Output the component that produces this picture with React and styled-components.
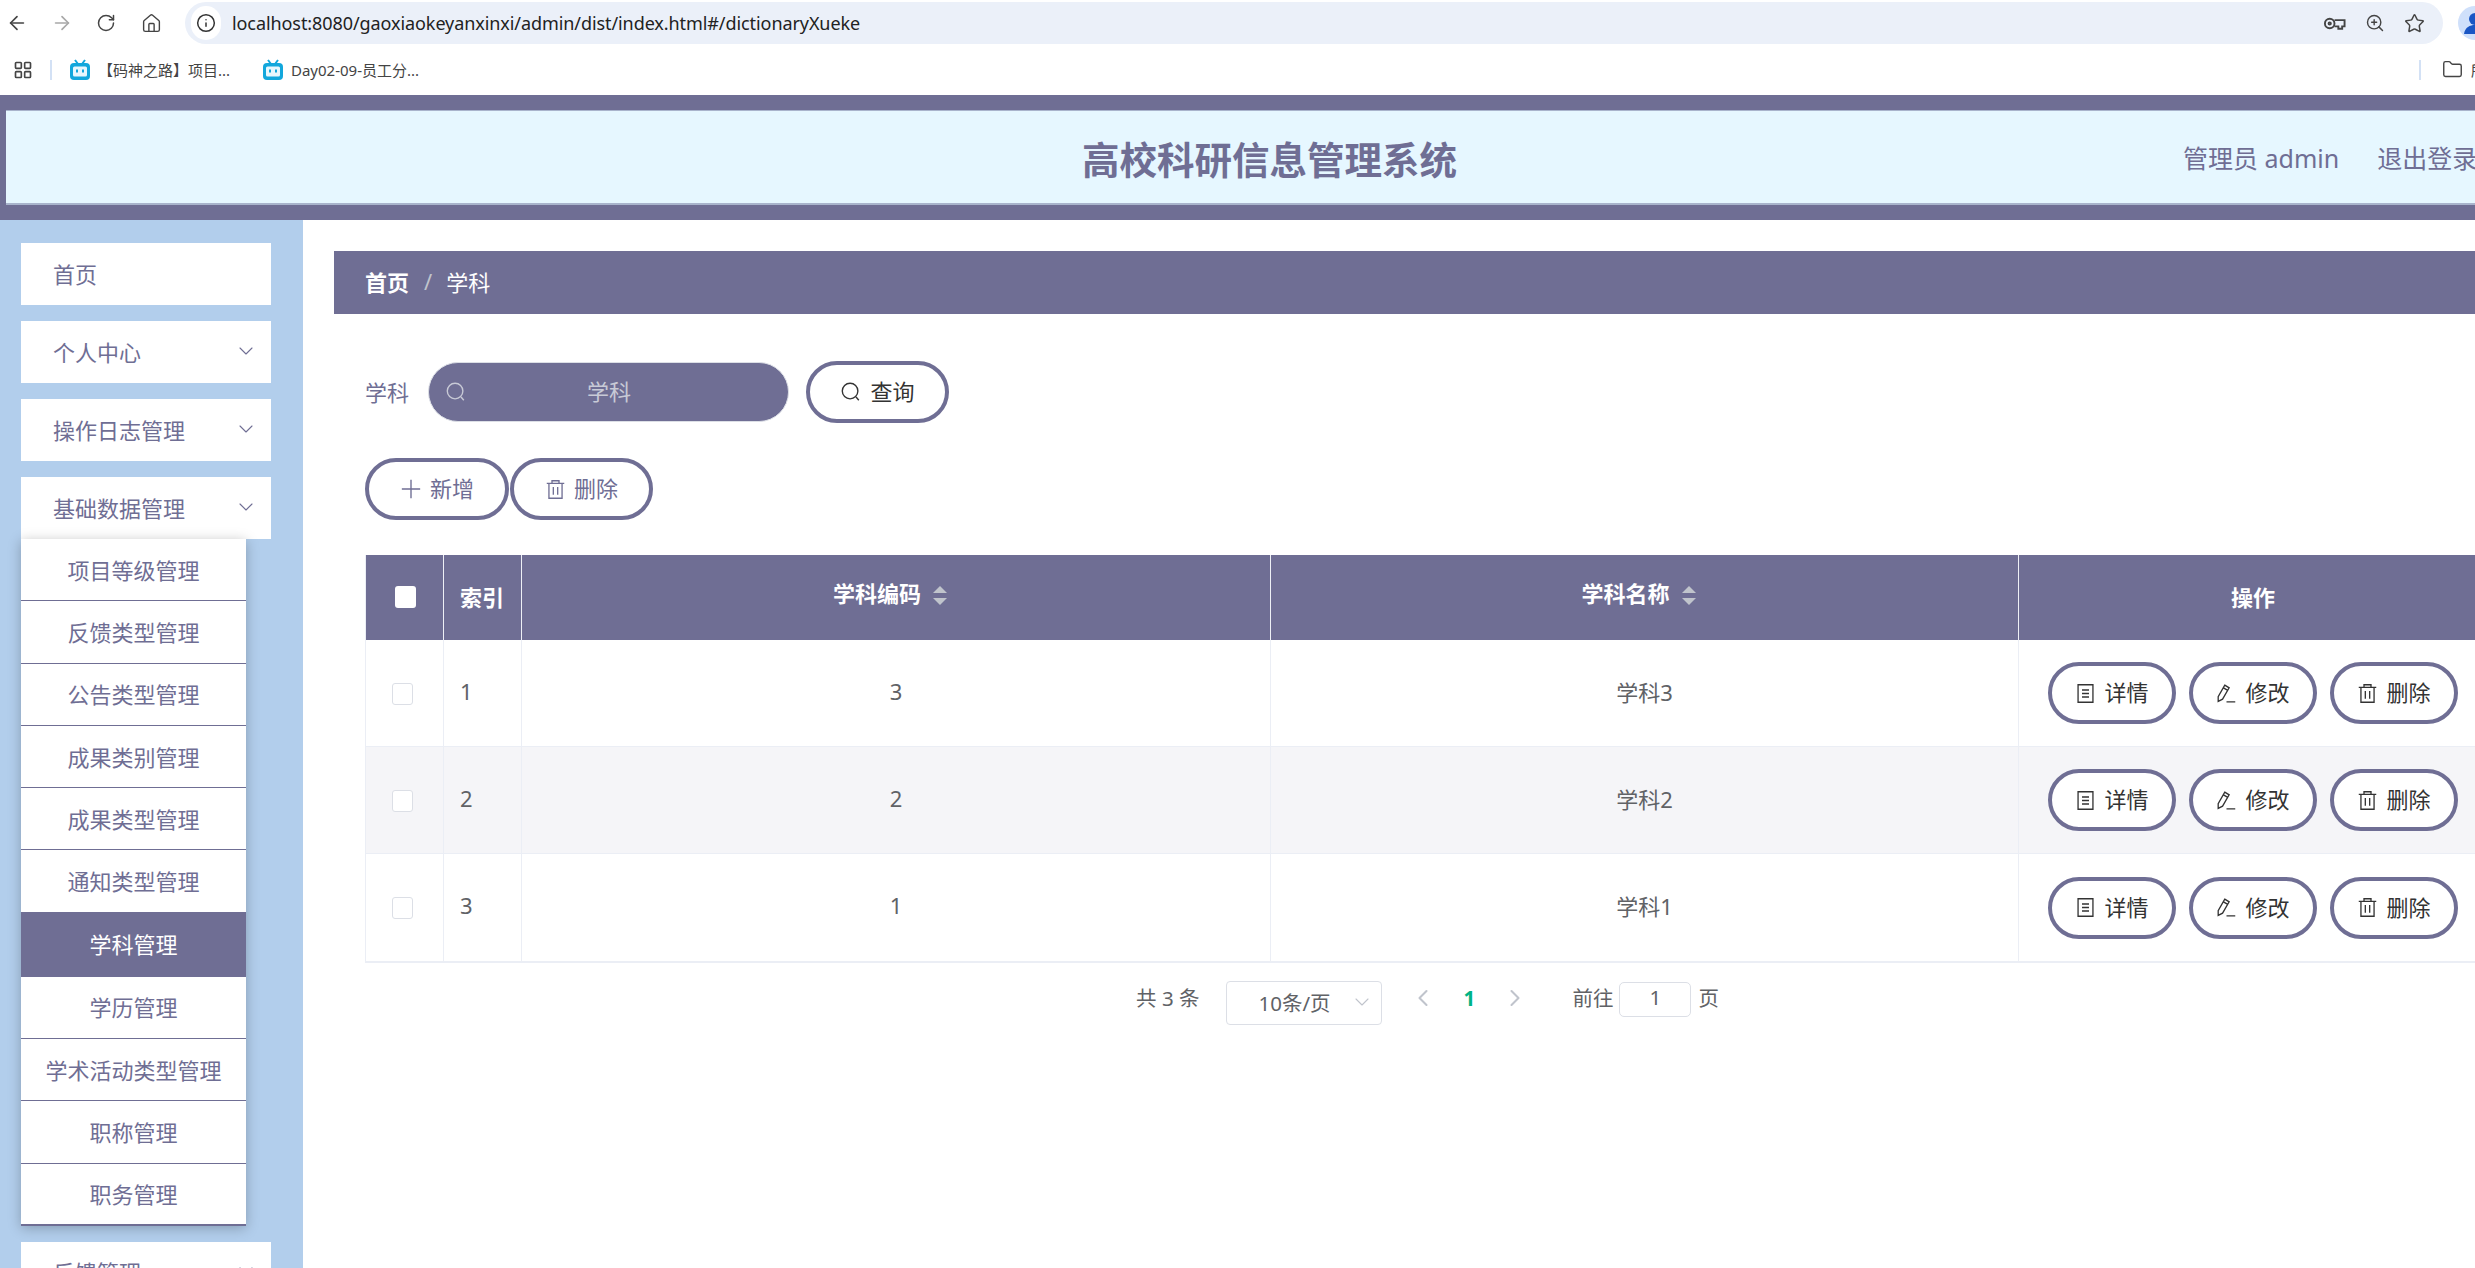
import styled, { createGlobalStyle } from 'styled-components';
import { ArrowLeft, ArrowRight, RotateCw, Home, Info, ZoomIn, Star, Folder, ChevronDown, ChevronLeft, ChevronRight, LayoutGrid } from 'lucide-react';

const purple = '#6f6e94';

const GlobalStyle = createGlobalStyle`
  html, body {
    margin: 0;
    padding: 0;
    width: 2475px;
    height: 1268px;
    overflow: hidden;
    background: #fff;
    font-family: "Noto Sans", "Noto Sans CJK SC", sans-serif;
  }
  * { box-sizing: border-box; }
  svg { flex-shrink: 0; }
`;

const Page = styled.div`
  width: 2475px;
  height: 1268px;
  display: flex;
  flex-direction: column;
  overflow: hidden;
`;

const Toolbar = styled.div`
  height: 46px;
  display: flex;
  align-items: center;
  padding: 2px 0;
  color: #444;
`;

const ToolIcon = styled.span`
  width: 45px;
  display: flex;
  padding-left: 6px;
  flex-shrink: 0;
  color: ${(p) => (p.$muted ? '#a8a8a8' : '#444')};
`;

const AddressBar = styled.div`
  width: 2258px;
  height: 42px;
  margin-left: 5px;
  flex-shrink: 0;
  border-radius: 21px;
  background: #ebf0f9;
  display: flex;
  align-items: center;
  padding: 0 18px 0 6px;
  font-size: 18px;
  letter-spacing: -0.08px;
  color: #222;
`;

const InfoBadge = styled.span`
  width: 30px;
  height: 34px;
  border-radius: 17px;
  background: #fff;
  display: flex;
  align-items: center;
  justify-content: center;
  margin-right: 11px;
  color: #333;
`;

const AddressRight = styled.div`
  margin-left: auto;
  display: flex;
  align-items: center;
  gap: 19px;
  color: #444;
`;

const Avatar = styled.span`
  margin-left: 15px;
  flex-shrink: 0;
  display: flex;
`;

const BookmarkBar = styled.div`
  height: 49px;
  display: flex;
  align-items: center;
  padding: 0 0 2px 13px;
  font-size: 15px;
  color: #444;
  white-space: nowrap;
`;

const Separator = styled.span`
  width: 2px;
  height: 20px;
  background: #d3e1f5;
  flex-shrink: 0;
  margin: ${(p) => p.$margin};
`;

const Bookmark = styled.span`
  display: flex;
  align-items: center;
  gap: 8px;
  width: ${(p) => p.$width}px;
  flex-shrink: 0;
`;

const BookmarkFolder = styled.span`
  margin-left: 21px;
  display: flex;
  align-items: center;
  gap: 8px;
  flex-shrink: 0;
`;

const Header = styled.header`
  height: 125px;
  background: ${purple};
  padding: 15px 0 15px 6px;
  flex-shrink: 0;
`;

const HeaderInner = styled.div`
  height: 95px;
  background: #e6f7ff;
  border-top: 1px solid #a9b4cc;
  border-bottom: 2px solid #a9b4cc;
  display: flex;
  align-items: center;
  overflow: hidden;
  color: ${purple};
  white-space: nowrap;
`;

const Title = styled.div`
  margin-left: 1076px;
  width: 375px;
  flex-shrink: 0;
  font-size: 37.5px;
  font-weight: 700;
`;

const HeaderLink = styled.span`
  margin-left: ${(p) => p.$left}px;
  flex-shrink: 0;
  font-size: 25px;
`;

const Main = styled.div`
  flex: 1;
  min-height: 0;
  display: flex;
`;

const Sidebar = styled.aside`
  width: 303px;
  flex-shrink: 0;
  background: #b2ceec;
  padding: 23px 0 0 21px;
  overflow: hidden;
`;

const MenuItem = styled.div`
  width: 250px;
  height: 62px;
  background: #fff;
  margin-bottom: ${(p) => (p.$open ? 0 : 16)}px;
  padding: 0 13px 3px 32px;
  display: flex;
  align-items: center;
  justify-content: space-between;
  font-size: 22px;
  color: ${purple};
`;

const SubMenu = styled.div`
  width: 225px;
  margin-bottom: 16px;
  background: #fff;
  box-shadow: 0 2px 12px rgba(0, 0, 0, 0.25);
  border-bottom: 2px solid ${purple};
  position: relative;
`;

const SubItem = styled.div`
  height: ${(p) => (p.$active ? 64 : 62.3)}px;
  padding-bottom: 2px;
  display: flex;
  align-items: center;
  justify-content: center;
  font-size: 22px;
  white-space: nowrap;
  color: ${(p) => (p.$active ? '#fff' : purple)};
  background: ${(p) => (p.$active ? purple : '#fff')};
  border-bottom: 1.5px solid ${purple};
  &:last-child {
    height: 60.3px;
    border-bottom: none;
  }
`;

const Content = styled.main`
  flex: 1;
  min-width: 0;
  padding: 31px 0 0 31px;
  overflow: hidden;
`;

const Breadcrumb = styled.div`
  height: 63px;
  background: ${purple};
  padding: 0 0 3px 31px;
  display: flex;
  align-items: center;
  font-size: 22px;
  color: #fff;
`;

const CrumbHome = styled.span`
  font-weight: 700;
`;

const CrumbSlash = styled.span`
  margin: 0 14px 0 15px;
  color: #c0c4cc;
`;

const Body = styled.div`
  padding-left: 31px;
`;

const SearchRow = styled.div`
  margin-top: 47px;
  height: 62px;
  display: flex;
  align-items: center;
`;

const SearchLabel = styled.label`
  width: 63px;
  padding-bottom: 3px;
  font-size: 22px;
  color: ${purple};
`;

const SearchBox = styled.div`
  width: 361px;
  height: 60px;
  border-radius: 30px;
  background: ${purple};
  border: 1px solid #dcdfe6;
  display: flex;
  align-items: center;
  padding-left: 16px;
  color: #c8cad6;
`;

const Placeholder = styled.span`
  flex: 1;
  text-align: center;
  font-size: 22px;
  padding: 0 37px 5px 0;
`;

const PillButton = styled.button`
  height: 62px;
  width: ${(p) => p.$width}px;
  flex-shrink: 0;
  padding: 0;
  border: 4px solid ${purple};
  border-radius: 31px;
  background: #fff;
  display: inline-flex;
  align-items: center;
  justify-content: center;
  gap: 8px;
  font-family: inherit;
  font-size: 22px;
  color: ${(p) => (p.$accent ? purple : '#333')};
`;

const PillLabel = styled.span`
  margin-bottom: 4px;
`;

const QueryWrap = styled.div`
  margin-left: 17px;
`;

const ActionRow = styled.div`
  margin-top: 35px;
  display: flex;
  gap: 1px;
`;

const TableClip = styled.div`
  margin-top: 35px;
  width: 2123px;
`;

const Table = styled.table`
  width: 2123px;
  table-layout: fixed;
  border-collapse: separate;
  border-spacing: 0;
  border-left: 1px solid #ebeef5;
  border-bottom: 2px solid #ebeef5;
`;

const HeadCell = styled.th`
  height: 85px;
  background: ${purple};
  color: #fff;
  font-size: 22px;
  font-weight: 700;
  text-align: ${(p) => p.$align || 'center'};
  padding: ${(p) => (p.$sort ? '0 12px 12px 0' : p.$align === 'left' ? '0 0 3px 16px' : '0 0 3px')};
  border-right: 1.5px solid #eef0f6;
  &:first-child {
    padding: 0 0 0 1px;
  }
`;

const Row = styled.tr`
  background: ${(p) => (p.$striped ? '#f5f5f8' : '#fff')};
`;

const Cell = styled.td`
  height: 107px;
  padding: ${(p) => (p.$align === 'left' ? '0 0 5px 16px' : '0 0 5px')};
  text-align: ${(p) => p.$align || 'center'};
  font-size: 22px;
  color: #606266;
  border-right: 1px solid #ebeef5;
  border-bottom: 1.5px solid #ebeef5;
  ${Row}:last-child & {
    border-bottom: none;
  }
`;

const Check = styled.span`
  display: inline-block;
  width: 21px;
  height: 22px;
  vertical-align: middle;
  border-radius: 3px;
  background: #fff;
  border: 1px solid #dcdfe6;
  margin-right: 5px;
`;

const HeadCheck = styled(Check)`
  border: none;
  margin-right: 0;
  margin-bottom: 6px;
`;

const SortCaret = styled.span`
  display: inline-flex;
  flex-direction: column;
  gap: 5px;
  margin-left: 12px;
  vertical-align: middle;
  &::before,
  &::after {
    content: '';
    border-left: 7px solid transparent;
    border-right: 7px solid transparent;
  }
  &::before {
    border-bottom: 7px solid #c0c4cc;
  }
  &::after {
    border-top: 7px solid #c0c4cc;
  }
`;

const OpCell = styled(Cell)`
  padding: 0 0 0 29px;
`;

const OpButtons = styled.div`
  display: flex;
  gap: 13px;
`;

const Pagination = styled.div`
  width: 2123px;
  margin-top: 18px;
  padding-left: 2px;
  display: flex;
  justify-content: center;
  align-items: flex-start;
  font-size: 20.5px;
  color: #606266;
`;

const PageText = styled.span`
  line-height: 34px;
  margin-left: ${(p) => p.$left || 0}px;
  white-space: pre;
`;

const PageSize = styled.div`
  width: 156px;
  height: 44px;
  margin-left: 27px;
  border: 1px solid #dcdfe6;
  border-radius: 4px;
  display: flex;
  align-items: center;
  justify-content: space-between;
  padding: 0 7px 3px 31px;
  color: #606266;
`;

const PageArrow = styled.span`
  display: flex;
  width: 28px;
  height: 34px;
  align-items: center;
  justify-content: center;
  color: #c0c4cc;
  margin-left: ${(p) => p.$left}px;
`;

const PageNumber = styled.span`
  width: 22px;
  margin-left: 21px;
  line-height: 34px;
  text-align: center;
  font-weight: 700;
  color: #00b386;
`;

const PageInput = styled.div`
  width: 72px;
  height: 35px;
  margin: 1px 7px 0 6px;
  border: 1px solid #dcdfe6;
  border-radius: 5px;
  text-align: center;
  line-height: 29px;
`;

const Stroke = ({ size, children, box = 24, width = 1.5 }) => (
  <svg width={size} height={size} viewBox={`0 0 ${box} ${box}`} fill="none" stroke="currentColor" strokeWidth={width}>
    {children}
  </svg>
);

const SearchIcon = ({ size = 22 }) => (
  <Stroke size={size}>
    <circle cx="11" cy="11" r="8.5" />
    <path d="M17.5 17.5 20.5 21" />
  </Stroke>
);

const PlusIcon = () => (
  <Stroke size={22}>
    <path d="M12 2v20M2 12h20" />
  </Stroke>
);

const TrashIcon = () => (
  <Stroke size={21}>
    <path d="M2 5h20M8 5V2h8v3M4.5 5v17h15V5M9.5 9v9M14.5 9v9" />
  </Stroke>
);

const TicketIcon = () => (
  <Stroke size={21}>
    <path d="M3.5 2h17v20h-17zM8 8h8M8 12h8M8 16h8" />
  </Stroke>
);

const EditIcon = () => (
  <Stroke size={21}>
    <path d="M10 2.5 15 5.5 7.5 18.5 2.5 21 2.5 15.5ZM8.5 5.5 13.5 8.5M12 21.5h10" />
  </Stroke>
);

const KeyIcon = () => (
  <Stroke size={23} width={2}>
    <circle cx="7" cy="12" r="5" />
    <circle cx="7" cy="12" r="1.2" />
    <path d="M12 8.5h10.5v6.5H20v2.5h-4V15h-4" />
  </Stroke>
);

const PersonAvatar = () => (
  <svg width="34" height="34" viewBox="0 0 34 34">
    <circle cx="17" cy="17" r="17" fill="#cfe0fb" />
    <circle cx="17" cy="13" r="6" fill="#1a56c4" />
    <path d="M6 28c1-7 6-9 11-9s10 2 11 9z" fill="#1a56c4" />
  </svg>
);

const TvIcon = () => (
  <svg width="20" height="21" viewBox="0 0 20 21">
    <path d="M5 1l3 4M15 1l-3 4" stroke="#12a7dc" strokeWidth="2" fill="none" />
    <rect x="0" y="4" width="20" height="17" rx="4" fill="#12a7dc" />
    <rect x="3" y="7.5" width="14" height="10" rx="1.5" fill="#e8f7fd" />
    <rect x="6" y="10.5" width="2" height="3" fill="#12a7dc" />
    <rect x="12" y="10.5" width="2" height="3" fill="#12a7dc" />
  </svg>
);

const subMenus = ['项目等级管理', '反馈类型管理', '公告类型管理', '成果类别管理', '成果类型管理', '通知类型管理', '学科管理', '学历管理', '学术活动类型管理', '职称管理', '职务管理'];

const rows = [
  { index: 1, code: '3', name: '学科3' },
  { index: 2, code: '2', name: '学科2' },
  { index: 3, code: '1', name: '学科1' },
];

const arrow = <ChevronDown size={24} strokeWidth={1.1} color={purple} />;

export default function App() {
  return (
    <Page>
      <GlobalStyle />
      <Toolbar>
        <ToolIcon><ArrowLeft size={22} strokeWidth={1.8} /></ToolIcon>
        <ToolIcon $muted><ArrowRight size={22} strokeWidth={1.8} /></ToolIcon>
        <ToolIcon><RotateCw size={20} strokeWidth={1.8} /></ToolIcon>
        <ToolIcon><Home size={21} strokeWidth={1.6} /></ToolIcon>
        <AddressBar>
          <InfoBadge><Info size={20} strokeWidth={1.8} /></InfoBadge>
          localhost:8080/gaoxiaokeyanxinxi/admin/dist/index.html#/dictionaryXueke
          <AddressRight>
            <KeyIcon />
            <ZoomIn size={20} strokeWidth={1.7} />
            <Star size={21} strokeWidth={1.7} />
          </AddressRight>
        </AddressBar>
        <Avatar><PersonAvatar /></Avatar>
      </Toolbar>
      <BookmarkBar>
        <LayoutGrid size={20} strokeWidth={2} />
        <Separator $margin="0 18px 0 17px" />
        <Bookmark $width={193}><TvIcon />【码神之路】项目...</Bookmark>
        <Bookmark $width={1000}><TvIcon />Day02-09-员工分...</Bookmark>
        <Separator $margin="0 0 0 1156px" />
        <BookmarkFolder>
          <Folder size={21} strokeWidth={1.6} />
          所有书签
        </BookmarkFolder>
      </BookmarkBar>
      <Header>
        <HeaderInner>
          <Title>高校科研信息管理系统</Title>
          <HeaderLink $left={726}>管理员 admin</HeaderLink>
          <HeaderLink $left={38}>退出登录</HeaderLink>
        </HeaderInner>
      </Header>
      <Main>
        <Sidebar>
          <MenuItem>首页</MenuItem>
          <MenuItem>个人中心{arrow}</MenuItem>
          <MenuItem>操作日志管理{arrow}</MenuItem>
          <MenuItem $open>基础数据管理{arrow}</MenuItem>
          <SubMenu>
            {subMenus.map((name) => (
              <SubItem key={name} $active={name === '学科管理'}>{name}</SubItem>
            ))}
          </SubMenu>
          <MenuItem>反馈管理{arrow}</MenuItem>
        </Sidebar>
        <Content>
          <Breadcrumb>
            <CrumbHome>首页</CrumbHome>
            <CrumbSlash>/</CrumbSlash>
            学科
          </Breadcrumb>
          <Body>
            <SearchRow>
              <SearchLabel>学科</SearchLabel>
              <SearchBox>
                <SearchIcon />
                <Placeholder>学科</Placeholder>
              </SearchBox>
              <QueryWrap>
                <PillButton $width={143}><SearchIcon /><PillLabel>查询</PillLabel></PillButton>
              </QueryWrap>
            </SearchRow>
            <ActionRow>
              <PillButton $width={144} $accent><PlusIcon /><PillLabel>新增</PillLabel></PillButton>
              <PillButton $width={143} $accent><TrashIcon /><PillLabel>删除</PillLabel></PillButton>
            </ActionRow>
            <TableClip>
              <Table>
                <colgroup>
                  <col style={{ width: 78 }} />
                  <col style={{ width: 78 }} />
                  <col style={{ width: 749 }} />
                  <col style={{ width: 748 }} />
                  <col />
                </colgroup>
                <thead>
                  <tr>
                    <HeadCell><HeadCheck /></HeadCell>
                    <HeadCell $align="left">索引</HeadCell>
                    <HeadCell $sort>学科编码<SortCaret /></HeadCell>
                    <HeadCell $sort>学科名称<SortCaret /></HeadCell>
                    <HeadCell>操作</HeadCell>
                  </tr>
                </thead>
                <tbody>
                  {rows.map((row, i) => (
                    <Row key={row.index} $striped={i === 1}>
                      <Cell><Check /></Cell>
                      <Cell $align="left">{row.index}</Cell>
                      <Cell>{row.code}</Cell>
                      <Cell>{row.name}</Cell>
                      <OpCell>
                        <OpButtons>
                          <PillButton $width={128}><TicketIcon /><PillLabel>详情</PillLabel></PillButton>
                          <PillButton $width={128}><EditIcon /><PillLabel>修改</PillLabel></PillButton>
                          <PillButton $width={128}><TrashIcon /><PillLabel>删除</PillLabel></PillButton>
                        </OpButtons>
                      </OpCell>
                    </Row>
                  ))}
                </tbody>
              </Table>
            </TableClip>
            <Pagination>
              <PageText>共 3 条</PageText>
              <PageSize>10条/页<ChevronDown size={24} strokeWidth={1.1} color="#c0c4cc" /></PageSize>
              <PageArrow $left={27}><ChevronLeft size={28} strokeWidth={1.8} /></PageArrow>
              <PageNumber>1</PageNumber>
              <PageArrow $left={21}><ChevronRight size={28} strokeWidth={1.8} /></PageArrow>
              <PageText $left={43}>前往</PageText>
              <PageInput>1</PageInput>
              <PageText>页</PageText>
            </Pagination>
          </Body>
        </Content>
      </Main>
    </Page>
  );
}
